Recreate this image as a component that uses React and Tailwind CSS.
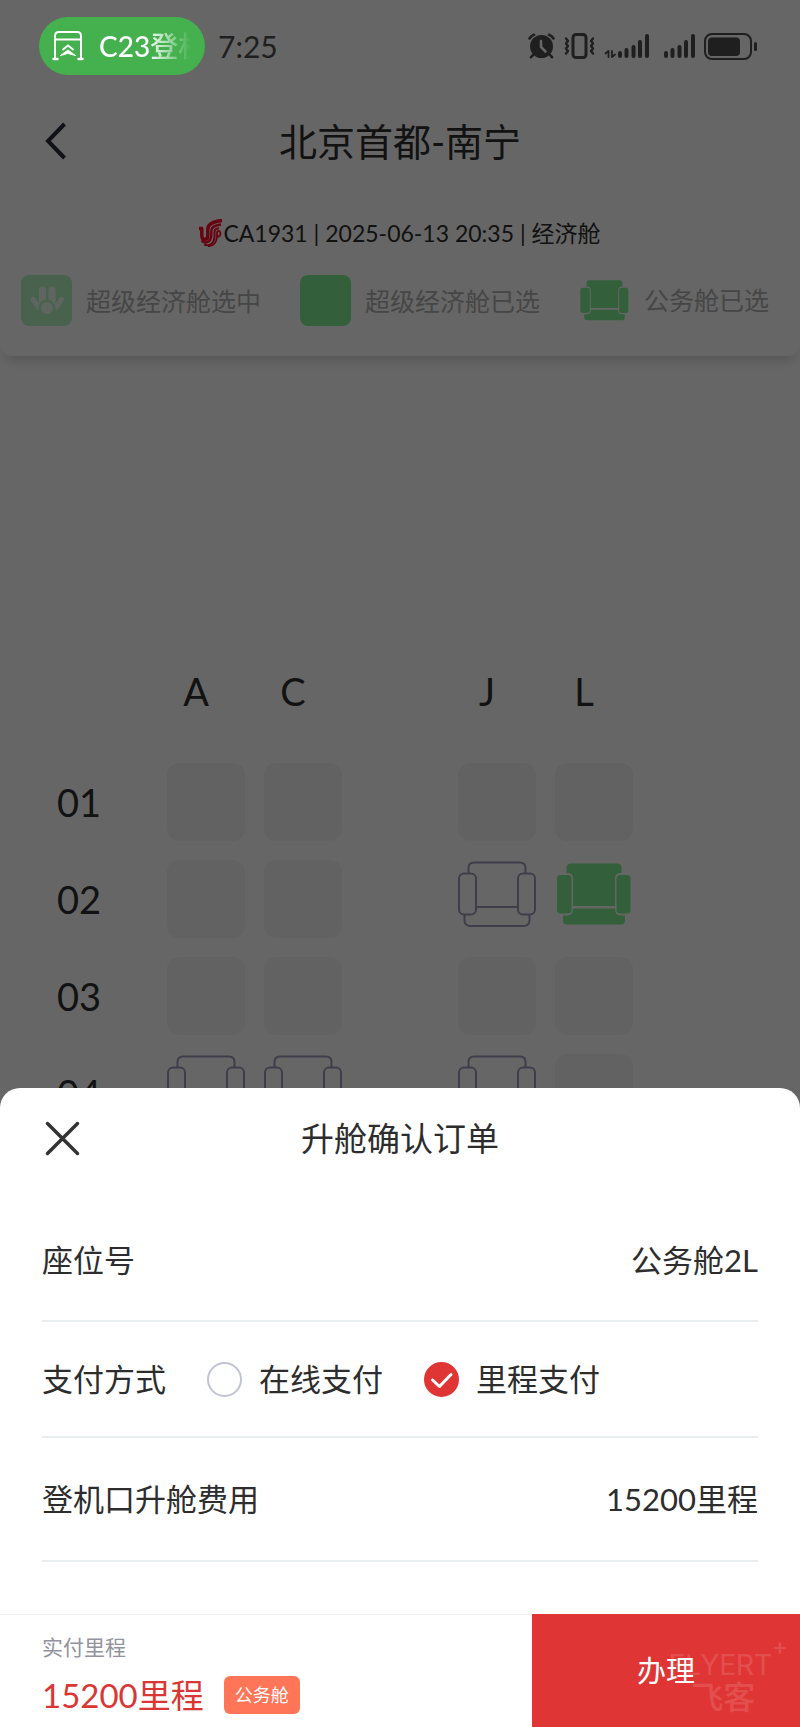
import React from 'react';

const seatColumns = ['A', 'C', null, 'J', 'L'];

const seatRows = [
  { row: '01', seats: { A: 'taken', C: 'taken', J: 'taken', L: 'taken' } },
  { row: '02', seats: { A: 'taken', C: 'taken', J: 'free', L: 'free' } },
  { row: '03', seats: { A: 'taken', C: 'taken', J: 'taken', L: 'taken' } },
  { row: '04', seats: { A: 'free', C: 'free', J: 'free', L: 'taken' } },
];

const paymentMethods = [
  { id: 'online', label: '在线支付' },
  { id: 'miles', label: '里程支付' },
];

function GateIcon() {
  return (
    <svg className="h-[30px] w-8 shrink-0" viewBox="0 0 32 30" fill="none" stroke="white" strokeWidth="2" strokeLinecap="round">
      <path d="M3 27V5q0-4 4-4h18q4 0 4 4v22M3 8.500h26" />
      <path d="M1.500 28h4M26.500 28h4" strokeWidth="2.500" />
      <path d="M11 18.500l5-4 5 4" strokeWidth="1.800" />
      <path d="M8.500 24.500L16 19l7.500 5.500L16 22.500z" fill="white" strokeWidth="1" strokeLinejoin="round" />
    </svg>
  );
}

function AlarmIcon() {
  return (
    <svg className="h-[26px] w-[27px]" viewBox="0 0 27 26" fill="none" strokeLinecap="round">
      <circle cx="13.500" cy="13.500" r="11.500" fill="#1f1f1f" />
      <path d="M1.500 5.500Q3 3 6 1.800M25.500 5.500Q24 3 21 1.800M5 22l-2 2.200M22 22l2 2.200" stroke="#1f1f1f" strokeWidth="2.600" />
      <path d="M13 8v6l4.500 4.500" stroke="#666" strokeWidth="2.600" />
    </svg>
  );
}

function VibrateIcon() {
  return (
    <svg className="h-[26px] w-[31px]" viewBox="0 0 31 26" fill="none" stroke="#1f1f1f" strokeLinecap="round" strokeLinejoin="round">
      <rect x="9" y="1.500" width="13" height="23" rx="3" strokeWidth="3" />
      <path d="M2 5.500l2 2.500-2 2.500 2 2.500-2 2.500 2 2.500-2 2.500M29 5.500l-2 2.500 2 2.500-2 2.500 2 2.500-2 2.500 2 2.500" strokeWidth="2.400" />
    </svg>
  );
}

function SignalIcon({ data }) {
  return (
    <svg className={data ? 'h-[26px] w-[45px]' : 'h-[26px] w-8'} viewBox={data ? '-13 0 45 26' : '0 0 32 26'} fill="none" stroke="#1f1f1f" strokeLinecap="round">
      <path d="M3 20v3M9.500 17v6M16.500 14v9M23 9v14M30 3v20" strokeWidth="4" />
      {data && <path d="M-8.500 24v-6l-3 2.500M-5 18v6l3-2.500" strokeWidth="1.800" strokeLinejoin="round" />}
    </svg>
  );
}

function BatteryIcon() {
  return (
    <svg className="h-[27px] w-[54px]" viewBox="0 0 54 27" fill="none">
      <rect x="1" y="1" width="46" height="25" rx="7" stroke="#1f1f1f" strokeWidth="2" />
      <rect x="4" y="4.500" width="32" height="18.500" rx="4" fill="#1f1f1f" />
      <path d="M51.500 10.500v6" stroke="#1f1f1f" strokeWidth="3" strokeLinecap="round" />
    </svg>
  );
}

function AirlineLogo() {
  return (
    <svg className="h-7 w-6" viewBox="0 0 24 28" fill="none" stroke="#ff0a2c">
      <path d="M0 9.500h4M2.800 9v7.500q0 4 3 4t3-4.500V10Q9 3 23 1.500" strokeWidth="3.400" />
      <path d="M2.500 21.500q2 2.500 5 1.800 4.800-1 4.800-8V12q0-5.500 9.700-6.500" strokeWidth="2.400" />
      <path d="M5 25.500q4 1.500 7-.5 3.500-2.500 3.500-8V13q0-3.500 4.500-3.700" strokeWidth="2" />
      <path d="M9 27.200q8-.2 9-9.200 1.500 0 3-1.500 1.200-3-.8-4.500-2.200-.5-2.200 2.500v4" strokeWidth="1.800" />
    </svg>
  );
}

function PawIcon() {
  return (
    <svg className="h-[51px] w-[51px]" viewBox="0 0 51 51" fill="none">
      <rect width="51" height="51" rx="8" fill="#b4f5c3" />
      <path d="M21.500 15v12M31 15v12" stroke="#eefff2" strokeWidth="7" strokeLinecap="round" />
      <path d="M12 24.500l6 8M40.500 24.500l-6 8" stroke="#eefff2" strokeWidth="5" strokeLinecap="round" />
      <circle cx="26" cy="33" r="8.500" fill="#b4f5c3" />
      <circle cx="26" cy="33" r="6" fill="#eefff2" />
    </svg>
  );
}

function FilledSeat({ className }) {
  return (
    <svg className={className} viewBox="0 0 78 68" fill="#80f092">
      <path d="M11.500 13V8q0-4.500 4.500-4.500h46q4.500 0 4.500 4.500v5h-1q-5.500 0-5.500 5.500V46H18V18.500q0-5.500-5.500-5.500z" />
      <rect x="2" y="15" width="14.500" height="38.500" rx="3.500" />
      <rect x="61.500" y="15" width="14" height="38.500" rx="3.500" />
      <path d="M18 48.500h42q0 7 5.500 7H70v5q0 4-4 4H12q-4 0-4-4v-5h4.500q5.500 0 5.500-7z" />
    </svg>
  );
}

function OutlineSeat({ className }) {
  return (
    <svg className={className} viewBox="0 0 78 68" fill="none" stroke="#a09ab8" strokeWidth="2">
      <path d="M10.500 13V8q0-5.500 5.500-5.500h46q5.500 0 5.500 5.500v5" />
      <rect x="1" y="13.500" width="17" height="41" rx="5" />
      <rect x="60" y="13.500" width="17" height="41" rx="5" />
      <path d="M18 47h42M6.500 54.500V60q0 6 6 6h53q6 0 6-6v-5.500" />
    </svg>
  );
}

function StatusBar() {
  return (
    <div className="relative z-20 flex h-[92px] items-center justify-between pr-[42px] pl-[39px]">
      <div className="flex items-center gap-[13px]">
        <div className="flex h-[58px] w-[166px] items-center gap-[15px] rounded-full bg-[#44b14e] pl-[13px]">
          <GateIcon />
          <span className="shrink-0 text-[28px] font-medium text-white [mask-image:linear-gradient(to_right,black_45%,transparent_86%)]">
            C23登机
          </span>
        </div>
        <span className="text-[30px] text-[#1f1f1f]">7:25</span>
      </div>
      <div className="flex items-center gap-[9px]">
        <AlarmIcon />
        <VibrateIcon />
        <SignalIcon data />
        <div className="pl-[5px]">
          <SignalIcon />
        </div>
        <BatteryIcon />
      </div>
    </div>
  );
}

function FlightHeader() {
  return (
    <header className="rounded-b-xl bg-white pb-[30px] text-[#2d2d2d] shadow-[0_10px_12px_-6px_rgba(0,0,0,0.18)]">
      <div className="grid h-[98px] grid-cols-[1fr_auto_1fr] items-center px-11">
        <button type="button" aria-label="返回" className="w-fit">
          <svg className="h-10 w-6" viewBox="0 0 24 40" fill="none" stroke="#2a2e3c" strokeWidth="4">
            <path d="M20.500 3L4 20l16.500 17" />
          </svg>
        </button>
        <h1 className="text-[38px]">北京首都-南宁</h1>
      </div>
      <div className="mt-7 flex h-[30px] items-center justify-center text-[23px]">
        <AirlineLogo />
        <span>CA1931 | 2025-06-13 20:35 | 经济舱</span>
      </div>
      <div className="mt-[27px] flex items-center justify-between pr-[31px] pl-[21px] text-[25px] leading-8 text-[#b0b0b0]">
        <div className="flex items-center gap-3.5">
          <PawIcon />
          <span>超级经济舱选中</span>
        </div>
        <div className="flex items-center gap-3.5">
          <span className="h-[51px] w-[51px] rounded-lg bg-[#80f092]" />
          <span>超级经济舱已选</span>
        </div>
        <div className="flex items-center gap-3.5">
          <FilledSeat className="w-[51px]" />
          <span>公务舱已选</span>
        </div>
      </div>
    </header>
  );
}

function Seat({ id, status, selected, onSelect }) {
  if (status === 'taken') {
    return <div className="h-[78px] rounded-xl bg-[#f6f6f6]" />;
  }
  return (
    <button
      type="button"
      aria-label={id}
      aria-pressed={selected}
      onClick={() => onSelect(id)}
      className="flex h-[78px] items-start"
    >
      {selected ? <FilledSeat className="h-[68px] w-full" /> : <OutlineSeat className="h-[68px] w-full" />}
    </button>
  );
}

function SeatMap({ selectedSeat, onSelect }) {
  return (
    <section className="mt-[311px] pl-[57px] text-[38px] text-[#2d2d2d]">
      <div className="mb-12 grid h-12 grid-cols-[91px_repeat(5,78px)] items-center gap-[19px]">
        <span />
        {seatColumns.map((column, index) => (
          <span key={index} className="pr-5 text-center">
            {column}
          </span>
        ))}
      </div>
      <div className="flex flex-col gap-[19px]">
        {seatRows.map(({ row, seats }) => (
          <div key={row} className="grid h-[78px] grid-cols-[91px_repeat(5,78px)] gap-[19px]">
            <span className="self-center">{row}</span>
            {seatColumns.map((column, index) =>
              column ? (
                <Seat
                  key={index}
                  id={row + column}
                  status={seats[column]}
                  selected={selectedSeat === row + column}
                  onSelect={onSelect}
                />
              ) : (
                <span key={index} />
              )
            )}
          </div>
        ))}
      </div>
    </section>
  );
}

function PaymentOption({ id, label, checked, onChange }) {
  return (
    <label className="flex items-center gap-[17px]">
      <span className="relative flex">
        <input
          type="radio"
          name="payment"
          value={id}
          checked={checked}
          onChange={() => onChange(id)}
          className="h-[35px] w-[35px] appearance-none rounded-full border-2 border-[#c0c3d5] bg-white checked:border-[#df3635] checked:bg-[#df3635]"
        />
        {checked && (
          <svg className="pointer-events-none absolute inset-0" viewBox="0 0 35 35" fill="none" stroke="white" strokeWidth="3" strokeLinecap="round" strokeLinejoin="round">
            <path d="M8.500 18l7 6.500L27 12.500" />
          </svg>
        )}
      </span>
      <span>{label}</span>
    </label>
  );
}

function UpgradeSheet({ payment, onPaymentChange }) {
  return (
    <section className="absolute inset-x-0 bottom-0 z-30 rounded-t-[20px] bg-white text-[#2d2d2d]">
      <div className="mb-3 grid h-[100px] grid-cols-[1fr_auto_1fr] items-center px-[45px]">
        <button type="button" aria-label="关闭" className="w-fit">
          <svg className="h-[35px] w-[35px]" viewBox="0 0 35 35" fill="none" stroke="#333" strokeWidth="3.500" strokeLinecap="round">
            <path d="M2.500 2.500l30 30M32.500 2.500l-30 30" />
          </svg>
        </button>
        <h2 className="text-[33px]">升舱确认订单</h2>
      </div>

      <div className="px-[42px] text-[31px]">
        <div className="flex h-[122px] items-center justify-between border-b-2 border-[#e8edef]">
          <span>座位号</span>
          <span>公务舱2L</span>
        </div>
        <div className="flex h-[116px] items-center gap-[41px] border-b-2 border-[#e8edef]">
          <span>支付方式</span>
          {paymentMethods.map((method) => (
            <PaymentOption
              key={method.id}
              id={method.id}
              label={method.label}
              checked={payment === method.id}
              onChange={onPaymentChange}
            />
          ))}
        </div>
        <div className="flex h-[124px] items-center justify-between border-b-2 border-[#e8edef]">
          <span>登机口升舱费用</span>
          <span>15200里程</span>
        </div>
      </div>

      <footer className="mt-[52px] flex h-[113px]">
        <div className="flex flex-1 flex-col justify-center gap-3 border-t border-[#eeeeee] pt-1 pl-[42px]">
          <span className="text-[21px] leading-8 text-[#92939e]">实付里程</span>
          <div className="flex items-center gap-5">
            <span className="text-[33px] text-[#d93634]">15200里程</span>
            <span className="flex h-[38px] w-[76px] items-center justify-center rounded-md bg-[#ff7557] text-[18px] text-white">
              公务舱
            </span>
          </div>
        </div>
        <button type="button" className="relative w-[268px] bg-[#df3635] text-[29px] text-white">
          办理
          <span className="absolute right-3 bottom-3 flex flex-col items-center text-white/15">
            <span className="flex font-[Inter,sans-serif] text-[28px] leading-7">
              FLYERT<sup className="text-[24px] leading-4">+</sup>
            </span>
            <span className="pr-2.5 text-[32px] leading-9 font-medium">飞客</span>
          </span>
        </button>
      </footer>
    </section>
  );
}

function App() {
  const [selectedSeat, setSelectedSeat] = React.useState('02L');
  const [payment, setPayment] = React.useState('miles');

  return (
    <main className="relative h-screen overflow-hidden bg-white font-[Lato,'Noto_Sans_CJK_SC',sans-serif] leading-10">
      <StatusBar />
      <FlightHeader />
      <SeatMap selectedSeat={selectedSeat} onSelect={setSelectedSeat} />
      <div className="absolute inset-0 z-10 bg-black/60" />
      <UpgradeSheet payment={payment} onPaymentChange={setPayment} />
    </main>
  );
}

export default App;
